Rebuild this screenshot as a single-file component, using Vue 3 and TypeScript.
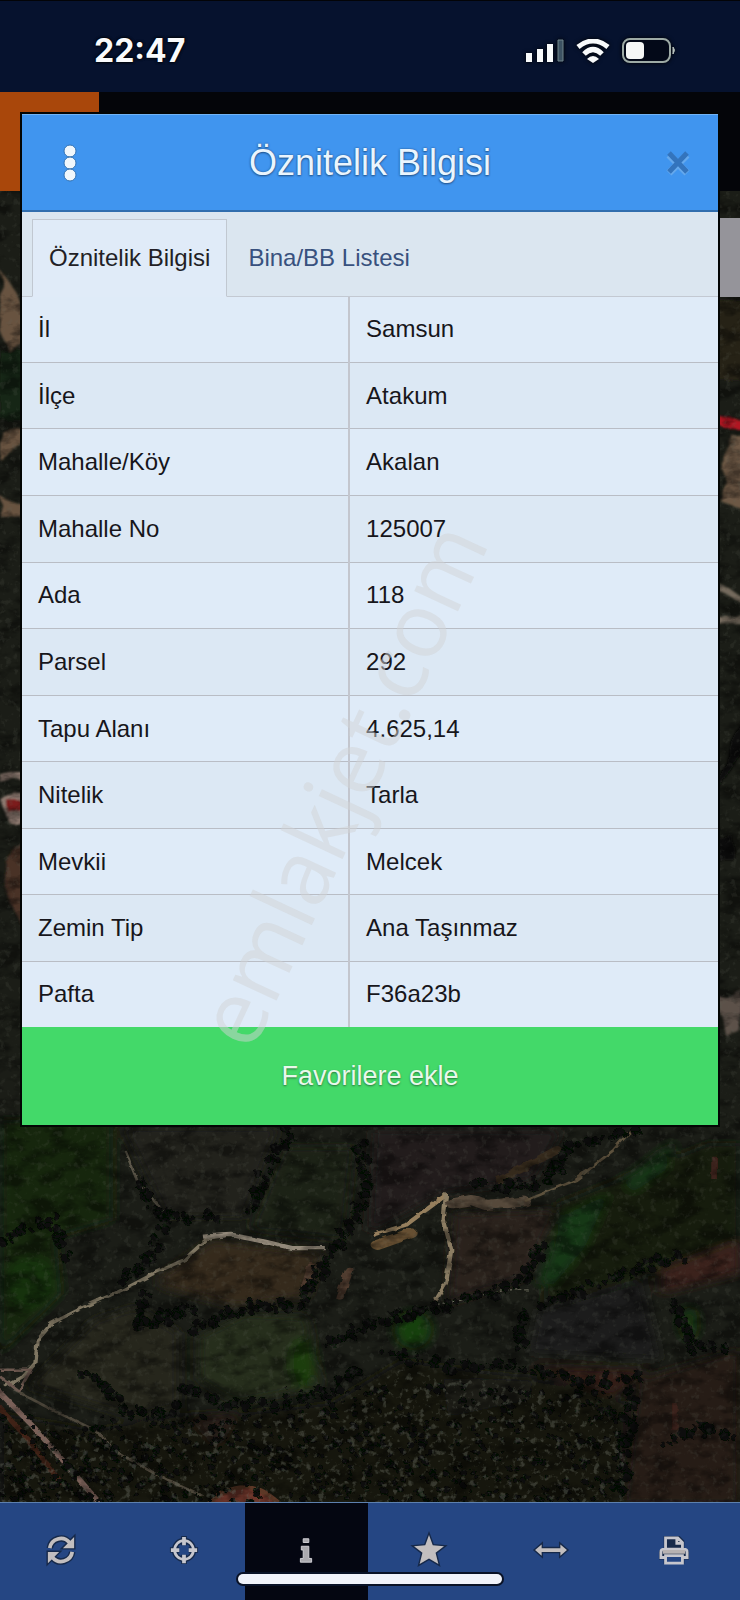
<script setup lang="ts">
import { ref } from 'vue'

interface Attribute {
  label: string
  value: string
}

interface Dot {
  x: number
  y: number
  r: number
}

const attributes: Attribute[] = [
  { label: 'İl', value: 'Samsun' },
  { label: 'İlçe', value: 'Atakum' },
  { label: 'Mahalle/Köy', value: 'Akalan' },
  { label: 'Mahalle No', value: '125007' },
  { label: 'Ada', value: '118' },
  { label: 'Parsel', value: '292' },
  { label: 'Tapu Alanı', value: '4.625,14' },
  { label: 'Nitelik', value: 'Tarla' },
  { label: 'Mevkii', value: 'Melcek' },
  { label: 'Zemin Tip', value: 'Ana Taşınmaz' },
  { label: 'Pafta', value: 'F36a23b' },
]

const activeTab = ref<'info' | 'list'>('info')

// Lines of trees that separate the fields on the map.
const hedges: number[][][] = [
  [[610, 30], [590, 100], [560, 170], [520, 280]],
  [[765, 60], [770, 120], [775, 190], [760, 270], [735, 340], [700, 400], [665, 480], [630, 555], [540, 560], [460, 595], [400, 630]],
  [[290, 180], [340, 290], [460, 290]],
  [[350, 300], [320, 410], [260, 500]],
  [[1360, 30], [1210, 80], [1160, 190], [1010, 200]],
  [[1440, 410], [1320, 465], [1250, 500], [1150, 560]],
  [[1150, 380], [1110, 480], [1030, 530], [920, 565], [780, 610], [690, 690]],
  [[820, 700], [950, 740], [1100, 740], [1230, 785], [1360, 770]],
  [[180, 760], [230, 820], [290, 890], [380, 860]],
  [[1110, 580], [1100, 700]],
  [[0, 370], [110, 300], [150, 410]],
  [[1430, 560], [1470, 690], [1560, 690]],
  [[1340, 800], [1330, 940], [1310, 1130]],
  [[310, 530], [300, 630], [400, 560], [340, 600]],
  [[390, 800], [470, 850], [600, 860], [700, 810], [760, 740]],
  [[1410, 970], [1480, 930], [1560, 950]],
]

function makeRandom(seed: number): () => number {
  let s = seed
  return () => {
    s = (s * 16807) % 2147483647
    return s / 2147483647
  }
}

function scatter(lines: number[][][]): Dot[] {
  const random = makeRandom(77)
  const dots: Dot[] = []
  for (const line of lines) {
    for (let i = 1; i < line.length; i++) {
      const [x0, y0] = line[i - 1]
      const [x1, y1] = line[i]
      const count = Math.ceil(Math.hypot(x1 - x0, y1 - y0) / 9)
      for (let n = 0; n < count; n++) {
        const t = n / count
        dots.push({
          x: Math.round(x0 + (x1 - x0) * t + (random() - 0.5) * 26),
          y: Math.round(y0 + (y1 - y0) * t + (random() - 0.5) * 30),
          r: Math.round(3 + random() * 8),
        })
      }
    }
  }
  return dots
}

const trees = scatter(hedges)

// Loose tree crowns of the forest in the lower part of the map.
function plantForest(): Dot[] {
  const random = makeRandom(501)
  return Array.from({ length: 700 }, () => {
    const x = Math.round(random() * 1320)
    const top = x < 600 ? 890 : 800
    return { x, y: Math.round(top + random() * (1150 - top)), r: Math.round(3 + random() * 5) }
  })
}

const forest = plantForest()
</script>

<template>
  <div class="screen">
    <header class="status">
      <time class="clock">22:47</time>
      <div class="indicators">
        <svg class="signal" viewBox="0 0 38 23" aria-hidden="true">
          <path d="M0 14h6v9H0zM11 10h6v13h-6zM21 5h6v18h-6z" fill="#f8fafb" />
          <path d="M32 1h5v21h-5z" fill="#3c5262" stroke="#71858b" />
        </svg>
        <svg class="wifi" viewBox="0 0 34 24" aria-hidden="true">
          <path d="M2 8Q17-4 32 8M8 15Q17 6 26 15" fill="none" stroke="#f8fafb" stroke-width="5" />
          <path d="M11 20Q17 14 23 20L17 24Z" fill="#f8fafb" />
        </svg>
        <svg class="battery" viewBox="0 0 54 25" aria-hidden="true">
          <rect x="1" y="1" width="47" height="23" rx="7" fill="#030918" stroke="#9daaa5" stroke-width="2" />
          <rect x="4" y="4" width="18" height="17" rx="4" fill="#f5f7f6" />
          <path d="M51 9q3 3 0 7z" fill="#b5bfbc" stroke="#b5bfbc" />
        </svg>
      </div>
    </header>

    <main class="stage">
      <svg class="map" viewBox="0 92 740 1410" preserveAspectRatio="xMidYMax slice" aria-hidden="true">
        <defs>
          <filter id="soft" x="-30%" y="-30%" width="160%" height="160%">
            <feGaussianBlur stdDeviation="12" />
          </filter>
          <filter id="bend" x="-10%" y="-10%" width="120%" height="120%">
            <feTurbulence type="fractalNoise" baseFrequency="0.04" numOctaves="2" seed="4" result="n" />
            <feDisplacementMap in="SourceGraphic" in2="n" scale="12" />
            <feGaussianBlur stdDeviation="1" />
          </filter>
          <filter id="rough" x="-10%" y="-10%" width="120%" height="120%">
            <feTurbulence type="fractalNoise" baseFrequency="0.06" numOctaves="3" seed="4" result="n" />
            <feDisplacementMap in="SourceGraphic" in2="n" scale="16" />
            <feGaussianBlur stdDeviation="1" />
          </filter>
          <filter id="grain" x="0" y="0" width="100%" height="100%">
            <feTurbulence type="fractalNoise" baseFrequency="0.04 0.07" numOctaves="4" seed="9" />
            <feColorMatrix values="0 0 0 0 0  0 0 0 0 0  0 0 0 0 0  3 2 0 0 -2.3" />
            <feComposite in2="SourceGraphic" operator="in" />
          </filter>
          <filter id="glint" x="0" y="0" width="100%" height="100%">
            <feTurbulence type="fractalNoise" baseFrequency="0.16" numOctaves="3" seed="22" />
            <feColorMatrix values="0 0 0 0 .12  0 0 0 0 .13  0 0 0 0 .1  4 3 0 0 -3.8" />
            <feComposite in2="SourceGraphic" operator="in" />
          </filter>
        </defs>

        <rect y="92" width="740" height="1410" fill="#1b1d17" />

        <g transform="translate(0 1120) scale(.472 .333)">
          <g filter="url(#soft)">
            <path d="M0 0H240V300L120 350L130 520L0 700Z" fill="#13250f" />
            <path d="M260 20H590L520 290H350Z" fill="#24211a" />
            <path d="M600 80H750L730 360L530 330Z" fill="#1a2014" />
            <path d="M790 30H1190L1130 180L940 220L780 340Z" fill="#201d1a" />
            <path d="M340 470L450 360L680 400L650 530L500 560L340 500Z" fill="#35291f" />
            <path d="M960 280L1180 270L1120 470L950 550Z" fill="#2b241d" />
            <path d="M60 800L200 600L290 560L380 640V860L280 890Z" fill="#27251e" />
            <path d="M420 650L520 580L650 590L680 800L500 850L420 780Z" fill="#272d1b" />
            <path d="M1180 250L1500 70H1568V400L1150 550Z" fill="#151f10" />
            <path d="M1140 570L1360 480L1400 720L1120 700Z" fill="#1e1f1b" />
            <path d="M1350 780L1568 690V1155H1320Z" fill="#261e19" />
            <path d="M1400 450L1568 360V460L1400 520Z" fill="#3a211a" />
            <path d="M1120 740L1370 750L1300 830Z" fill="#301c17" />
            <ellipse cx="65" cy="490" rx="60" ry="80" fill="#17310f" />
            <ellipse cx="640" cy="730" rx="26" ry="75" fill="#1d3c10" />
            <ellipse cx="875" cy="630" rx="38" ry="55" fill="#183f11" />
            <path d="M1140 490L1190 290L1290 220L1240 380L1170 500Z" fill="#193913" />
            <path d="M1320 180L1430 60L1410 150L1340 220Z" fill="#193513" />
            <ellipse cx="1460" cy="610" rx="18" ry="50" fill="#17340f" />
            <path d="M0 880L200 930L300 900L400 880L520 880L700 850L850 720L1000 750L1230 800L1330 850L1310 1155H0Z" fill="#141411" />
            <path d="M410 900L500 880L460 980Z" fill="#2d231c" />
            <path d="M940 780L1130 770L1120 840L950 890Z" fill="#1b1e19" />
          </g>
          <g filter="url(#bend)" fill="none" stroke-linejoin="round">
            <path d="M265 90L290 180L345 275" stroke="#5b5648" stroke-width="6" />
            <path d="M10 800L50 770L75 730L80 660L110 610L180 560L260 510L320 465L390 420L440 355L490 345L560 365L620 385L690 385" stroke="#7f7662" stroke-width="9" />
            <path d="M430 350L490 345L560 365L620 385L690 385" stroke="#93897a" stroke-width="13" />
            <path d="M790 345L860 315L945 225" stroke="#967f5d" stroke-width="11" />
            <path d="M800 375L870 340" stroke="#665030" stroke-width="30" stroke-linecap="round" />
            <path d="M945 220L940 300L956 390L945 490L920 550" stroke="#8c7d64" stroke-width="9" />
            <path d="M960 250L1000 240L1030 255L1110 245" stroke="#57483a" stroke-width="30" stroke-linecap="round" />
            <path d="M1110 245L1220 180L1300 90L1350 10" stroke="#5d513c" stroke-width="7" />
            <path d="M740 450L720 530M660 440L645 510" stroke="#503b2e" stroke-width="18" stroke-linecap="round" />
            <path d="M920 555L1000 535L1060 510L1120 510" stroke="#6b6b5b" stroke-width="4" stroke-dasharray="12 6" />
            <path d="M-20 790L70 920L150 1050L220 1165" stroke="#7a6058" stroke-width="13" />
            <path d="M-10 850L60 960L130 1090" stroke="#3f2119" stroke-width="12" />
            <path d="M30 810L110 870L200 930L250 1000L360 1085L430 1130" stroke="#4d463a" stroke-width="7" />
            <path d="M0 750H65L40 815L0 770" stroke="#6d5950" stroke-width="7" />
            <path d="M430 1165Q520 1040 600 1165Z" fill="#6d3629" stroke="#5d3827" stroke-width="12" />
            <path d="M1060 180L1180 90" stroke="#35291e" stroke-width="22" stroke-linecap="round" />
            <path d="M1430 930V850M1515 180V110" stroke="#3a201a" stroke-width="12" />
          </g>
          <g filter="url(#rough)" fill="#070907">
            <ellipse v-for="(tree, i) in trees" :key="i" :cx="tree.x" :cy="tree.y" :rx="tree.r" :ry="tree.r + 4" />
            <ellipse v-for="(tree, i) in forest" :key="i" :cx="tree.x" :cy="tree.y" :rx="tree.r" :ry="tree.r + 2" />
          </g>
        </g>

        <g filter="url(#bend)">
          <path d="M0 270L14 290L24 310L20 340L8 350L0 330ZM0 430H24V445L0 460ZM0 496L24 505V520L0 516Z" fill="#675241" />
          <path d="M0 350H24V420H0Z" fill="#182818" />
          <path d="M0 774H24V782H0ZM0 800L24 792V822H8Z" fill="#8d7970" />
          <path d="M8 802h16v10H8Z" fill="#7b1a1b" />
          <path d="M5 860L24 840V930L8 900Z" fill="#493128" />
          <path d="M716 300h30v80h-30Z" fill="#272019" />
          <path d="M716 417l30 2v8h-30Z" fill="#b11720" />
          <path d="M728 432h18v78l-24-8Z" fill="#6d5944" />
          <path d="M716 585l30 18M716 620h30" stroke="#756b5d" stroke-width="6" />
          <path d="M716 780l30-60v30l-30 40ZM716 840h20v20h-20Z" fill="#070907" />
          <path d="M720 1000l20-10v40l-14 6Z" fill="#5c5148" />
        </g>
        <rect y="191" width="740" height="1311" filter="url(#grain)" opacity=".4" />
        <path d="M0 1422L120 1440L230 1422L330 1410L400 1370L580 1395L625 1432V1502H0Z" filter="url(#glint)" opacity=".35" />
        <rect y="191" width="740" height="1311" filter="url(#glint)" opacity=".16" />
      </svg>

      <div class="appbar"><span class="appbar-button"></span></div>
      <span class="map-control"></span>

      <section class="dialog" aria-labelledby="dialog-title">
        <header class="dialog-head">
          <button class="head-button" type="button" aria-label="Menü">
            <svg viewBox="0 0 14 38" width="14" height="38">
              <g fill="#f0f7fc" stroke="#3373b4">
                <circle cx="7" cy="7" r="6" />
                <circle cx="7" cy="19" r="6" />
                <circle cx="7" cy="31" r="6" />
              </g>
            </svg>
          </button>
          <h1 id="dialog-title">Öznitelik Bilgisi</h1>
          <button class="head-button" type="button" aria-label="Kapat">
            <svg viewBox="0 0 26 26" width="26" height="26" fill="none">
              <path d="M4 5L22 23M22 5L4 23" stroke="#65a9ed" stroke-width="7" />
              <path d="M4 3L22 22M22 3L4 22" stroke="#3374bd" stroke-width="5" />
            </svg>
          </button>
        </header>

        <div class="tabs" role="tablist">
          <button class="tab" :class="{ active: activeTab === 'info' }" type="button" role="tab" :aria-selected="activeTab === 'info'" @click="activeTab = 'info'">Öznitelik Bilgisi</button>
          <button class="tab" :class="{ active: activeTab === 'list' }" type="button" role="tab" :aria-selected="activeTab === 'list'" @click="activeTab = 'list'">Bina/BB Listesi</button>
        </div>

        <table class="attributes">
          <tbody>
            <tr v-for="item in attributes" :key="item.label">
              <th scope="row">{{ item.label }}</th>
              <td>{{ item.value }}</td>
            </tr>
          </tbody>
        </table>

        <button class="favorite" type="button">Favorilere ekle</button>

        <svg class="watermark" viewBox="0 0 696 1011" aria-hidden="true">
          <text transform="translate(349 684) rotate(-65)" text-anchor="middle">emlakjet.com</text>
        </svg>
      </section>
    </main>

    <nav class="toolbar">
      <button type="button" aria-label="Yenile">
        <svg viewBox="0 0 32 32">
          <g fill="none" stroke="#16294a" stroke-width="7">
            <path d="M4 14A12 12 0 0 1 25 8M28 18A12 12 0 0 1 7 24" />
          </g>
          <path class="edge" d="M30 2V14H18ZM2 30V18H14Z" />
          <path d="M4 14A12 12 0 0 1 25 8M28 18A12 12 0 0 1 7 24" fill="none" stroke="#c2bebf" stroke-width="4" />
        </svg>
      </button>
      <button type="button" aria-label="Konum">
        <svg viewBox="0 0 32 32">
          <g fill="none" stroke="#16294a" stroke-width="6"><circle cx="16" cy="16" r="10" /><path d="M16 1v10M16 21v10M1 16h10M21 16h10" /></g>
          <g fill="none" stroke="#c6c6cd" stroke-width="3"><circle cx="16" cy="16" r="10" /><path stroke-width="4" d="M16 2v9M16 21v9M2 16h9M21 16h9" /></g>
        </svg>
      </button>
      <button class="current" type="button" aria-label="Bilgi">
        <svg viewBox="0 0 32 32">
          <path d="M13 4h6v4h-6zM11 12h8v13h3v4H10v-4h3v-9h-2z" fill="#aaa9ae" stroke="#d3d2d7" />
        </svg>
      </button>
      <button type="button" aria-label="Favoriler">
        <svg viewBox="0 0 32 32">
          <path class="edge" d="M16 0L20 11L32 12L23 19L26 31L16 25L6 31L9 19L0 12L12 11Z" />
        </svg>
      </button>
      <button type="button" aria-label="Ölç">
        <svg viewBox="0 0 32 32">
          <path class="edge" d="M-1 16L6 10V14H26V10L33 16L26 22V18H6V22Z" />
        </svg>
      </button>
      <button type="button" aria-label="Yazdır">
        <svg viewBox="0 0 32 32">
          <path d="M5 14V1H22L27 6V14L32 17V26H27V31H5V26H0V17Z" fill="#16294a" />
          <path d="M7 15V3H20L25 8V15M19 3V9H25M7 24H2V18Q2 15 6 15H26Q30 15 30 18V24H25" fill="none" stroke="#c6c6cd" stroke-width="3" />
          <path d="M4 16H28V20H4Z" fill="#b7b2b2" />
          <path d="M7 22H25V30H7Z" fill="#254683" stroke="#c6c6cd" stroke-width="3" />
        </svg>
      </button>
      <span class="home-indicator"></span>
    </nav>
  </div>
</template>

<style>
body {
  margin: 0;
  background: #050609;
}
</style>

<style scoped>
.screen {
  display: flex;
  flex-direction: column;
  min-height: 100vh;
  overflow: hidden;
  font-family: 'Liberation Sans', Arial, sans-serif;
}

button {
  margin: 0;
  padding: 0;
  border: 0;
  background: none;
  font: inherit;
  cursor: pointer;
}

.status {
  box-sizing: border-box;
  display: flex;
  align-items: center;
  justify-content: space-between;
  height: 92px;
  padding: 8px 64px 0 94px;
  border-top: 1px solid #030407;
  background: #06122e;
  color: #fafbfc;
}

.clock {
  font: 700 32px/36px Inter, sans-serif;
  text-shadow: 0 0 3px #000, 0 0 3px #000;
}

.indicators {
  display: flex;
  align-items: center;
  gap: 12px;
  filter: drop-shadow(0 0 2px #000);
}

.signal {
  width: 38px;
  height: 23px;
}

.wifi {
  width: 34px;
  height: 24px;
}

.battery {
  width: 54px;
  height: 25px;
}

.stage {
  position: relative;
  flex: 1;
}

.map {
  position: absolute;
  inset: 0;
  width: 100%;
  height: 100%;
}

.appbar {
  position: absolute;
  inset: 0 0 auto;
  height: 99px;
  background: #040509;
}

.appbar-button {
  display: block;
  width: 99px;
  height: 99px;
  background: #a9470b;
}

.map-control {
  position: absolute;
  top: 126px;
  right: 0;
  width: 20px;
  height: 79px;
  background: #95949a;
}

.dialog {
  position: relative;
  margin: 22px;
  background: #dfebf8;
  box-shadow: 0 0 0 2px #030504;
}

.dialog-head {
  display: grid;
  grid-template-columns: 64px 1fr 80px;
  align-items: center;
  height: 98px;
  padding-left: 16px;
  box-sizing: border-box;
  border-top: 1px solid #72b4f6;
  border-bottom: 2px solid #316eae;
  background: #4095ef;
}

.head-button {
  display: flex;
  align-items: center;
  justify-content: center;
  height: 60px;
}

.dialog-head h1 {
  margin: 0;
  color: #eaf5fe;
  font-size: 36px;
  font-weight: 400;
  line-height: 44px;
  text-align: center;
  text-shadow: 0 0 2px #23558e, 0 1px 2px #23558e;
}

.tabs {
  display: flex;
  height: 85px;
  padding: 7px 10px 0;
  box-sizing: border-box;
  border-bottom: 1px solid #c3c9d2;
  background: #dbe6f0;
}

.tab {
  box-sizing: border-box;
  height: 78px;
  padding: 0 16px;
  border: 1px solid transparent;
  color: #38517e;
  font-size: 24px;
  line-height: 28px;
}

.tab + .tab {
  margin-left: 4px;
}

.tab.active {
  border-color: #c1c8d1;
  border-bottom-color: #e0ebf8;
  background: #e0ebf8;
  color: #231f26;
}

.attributes {
  width: 100%;
  height: 730px;
  border-collapse: collapse;
  table-layout: fixed;
  color: #17161b;
  font-size: 24px;
  line-height: 28px;
}

.attributes th,
.attributes td {
  padding: 0 16px;
  border-bottom: 1px solid #b9bdc5;
  font-weight: 400;
  text-align: left;
}

.attributes th {
  width: 47%;
  box-sizing: border-box;
  border-right: 2px solid #c3c6ce;
}

.attributes tr:nth-child(even) {
  background: #dce8f4;
}

.attributes tr:last-child > * {
  border-bottom: 0;
}

.favorite {
  display: block;
  width: 100%;
  height: 98px;
  background: #43d969;
  color: #e9f8eb;
  font-size: 27px;
  line-height: 32px;
  text-shadow: 0 1px 2px #28733b;
}

.watermark {
  position: absolute;
  inset: 0;
  width: 100%;
  height: 100%;
  overflow: visible;
  pointer-events: none;
}

.watermark text {
  fill: #d2d4d5;
  fill-opacity: 0.5;
  font-family: 'Open Sans', sans-serif;
  font-size: 90px;
}

.toolbar {
  position: relative;
  display: grid;
  grid-template-columns: repeat(6, 1fr);
  height: 98px;
  padding-right: 5px;
  box-sizing: border-box;
  border-top: 1px solid #5d80ae;
  background: #254683;
}

.toolbar button {
  display: flex;
  align-items: center;
  justify-content: center;
  padding-bottom: 3px;
}

.toolbar button.current {
  background: #040611;
}

.toolbar svg {
  width: 30px;
  height: 30px;
  overflow: visible;
}

.edge {
  fill: #c2bebf;
  stroke: #16294a;
  stroke-width: 3;
  paint-order: stroke;
}

.home-indicator {
  position: absolute;
  bottom: 16px;
  left: 50%;
  width: 264px;
  height: 10px;
  margin-left: -132px;
  border-radius: 5px;
  background: #f1f3fa;
  box-shadow: 0 0 0 2px #0a1226;
}
</style>
